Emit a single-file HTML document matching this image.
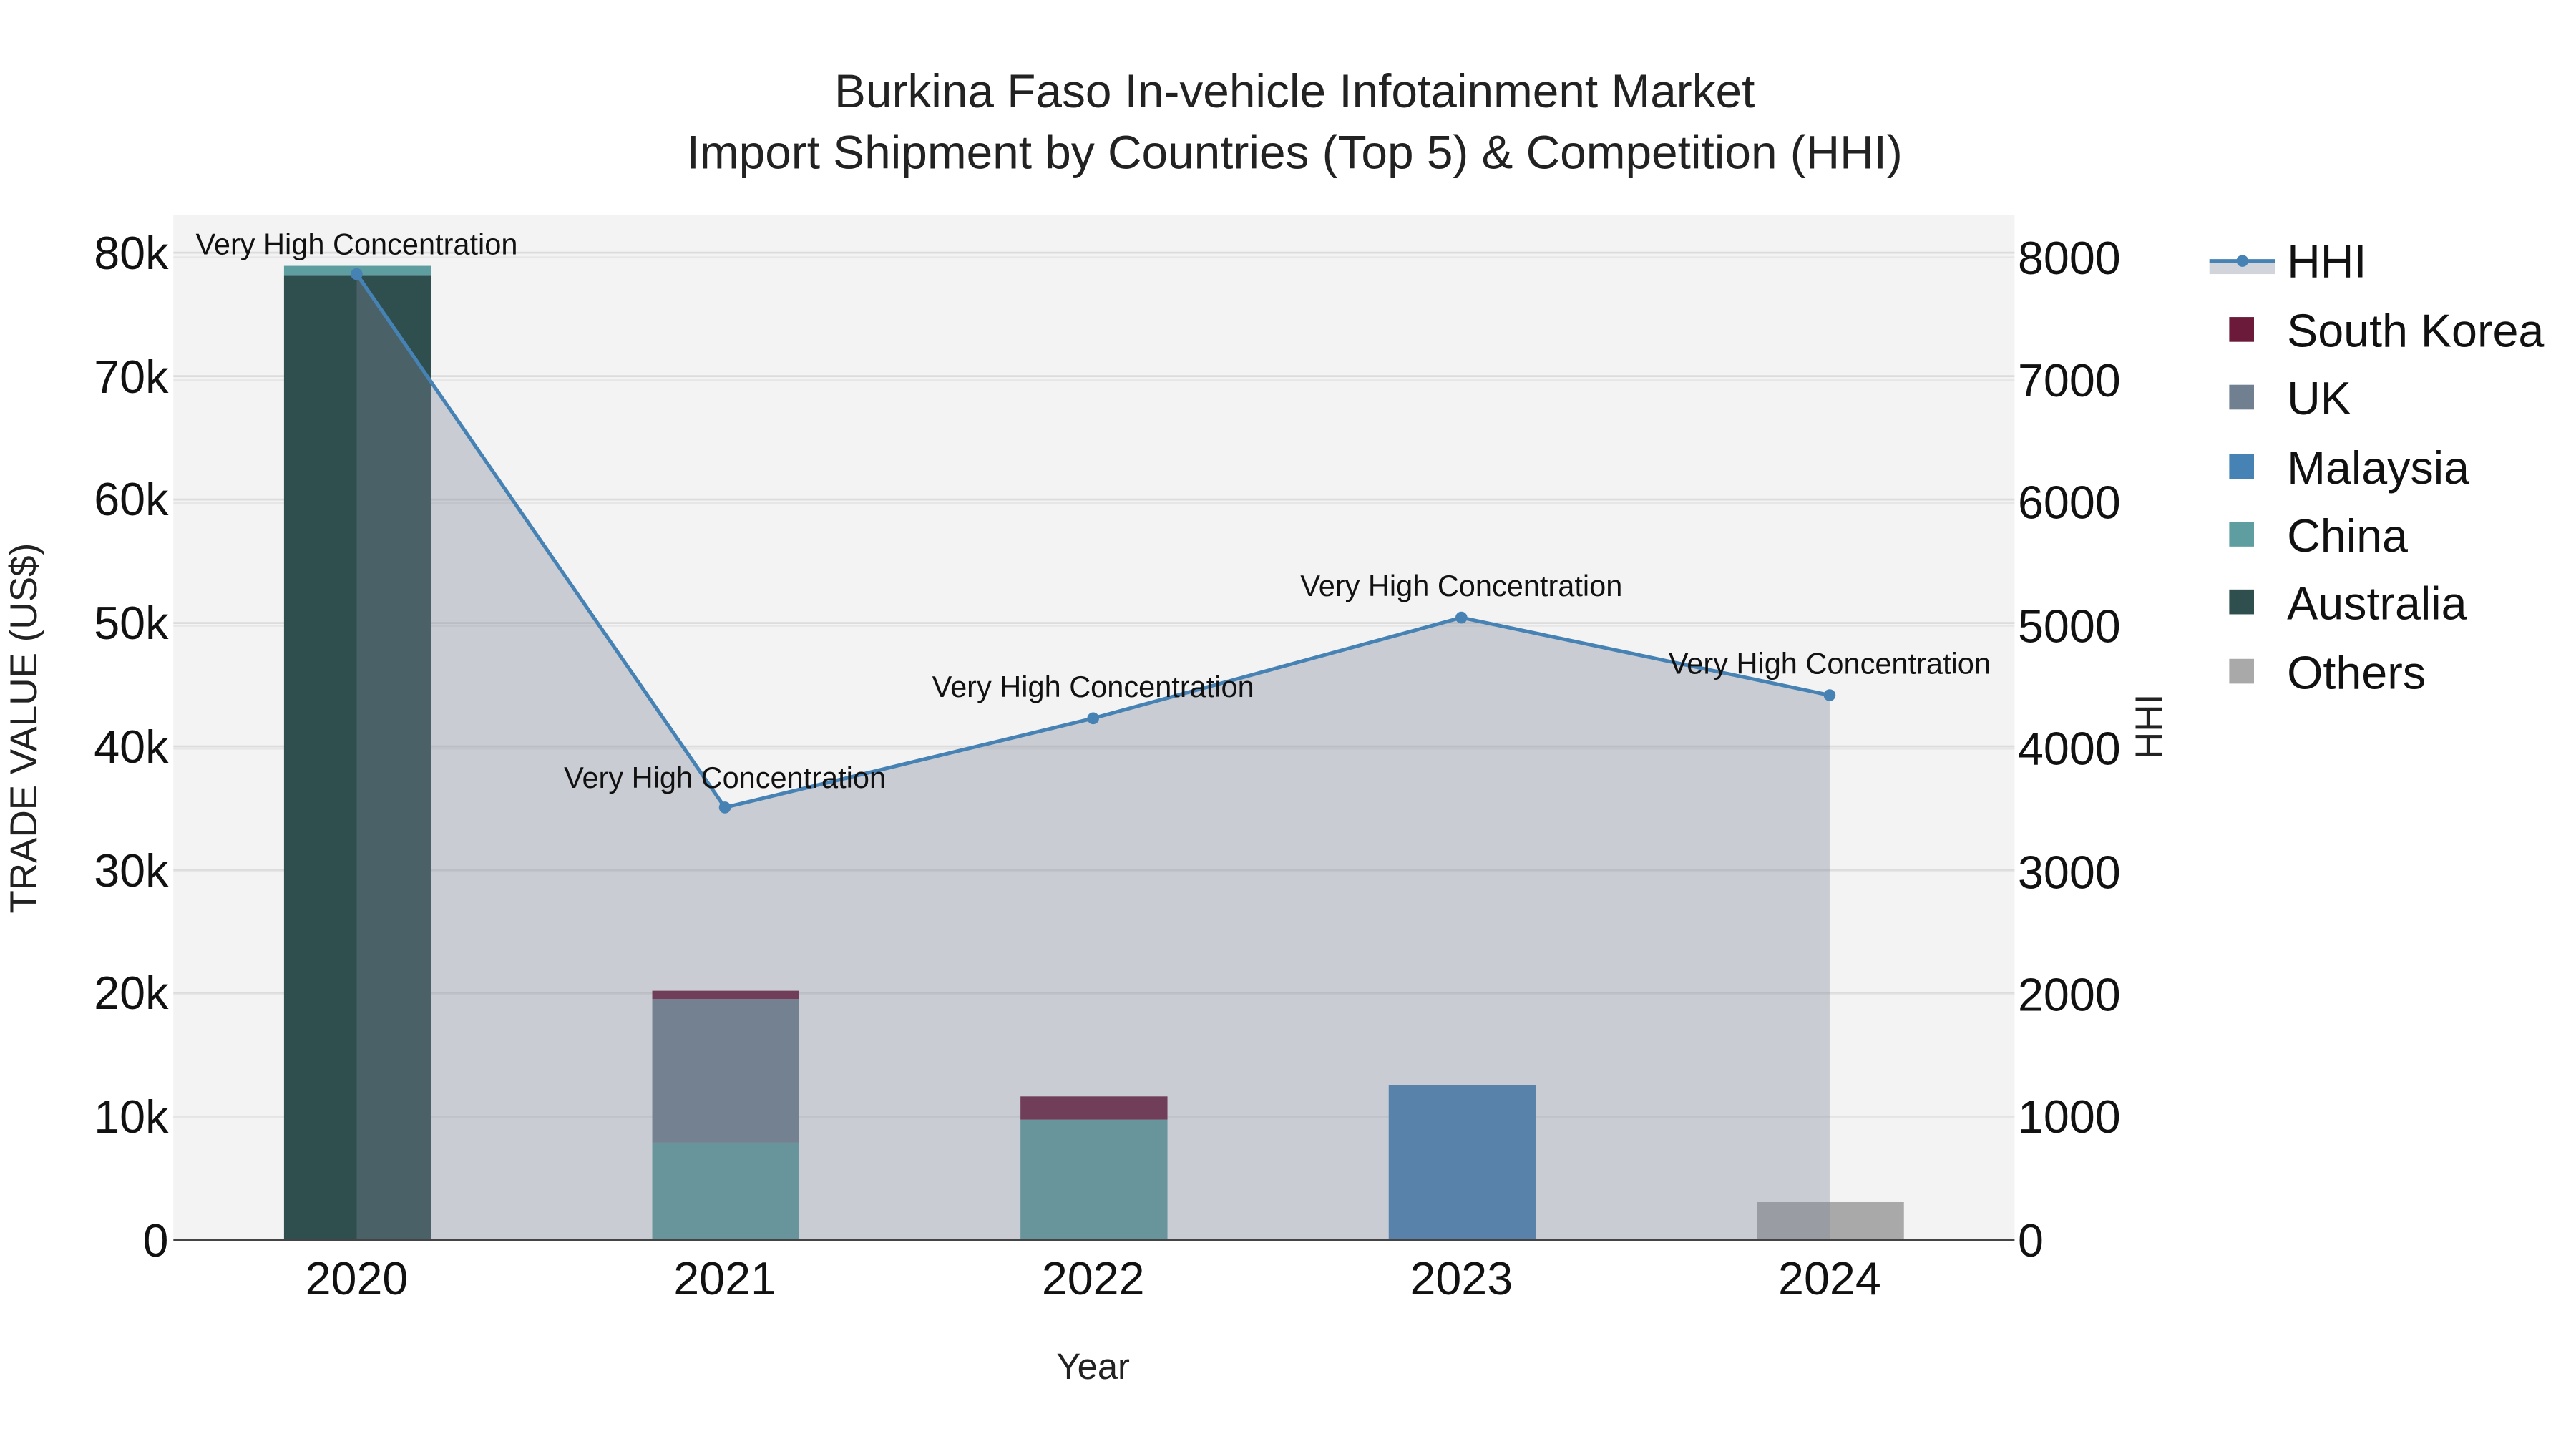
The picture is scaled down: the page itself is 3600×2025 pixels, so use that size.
<!DOCTYPE html>
<html><head><meta charset="utf-8"><style>
html,body{margin:0;padding:0;background:#fff;}
svg{display:block;}
text{font-family:"Liberation Sans",sans-serif;}
</style></head><body>
<svg width="3600" height="2025" viewBox="0 0 1560 877.5" xmlns="http://www.w3.org/2000/svg">
<rect x="0" y="0" width="1560" height="877.5" fill="#fff"/>
<rect x="105" y="130" width="1115" height="621" fill="#f3f3f3"/>
<g stroke="#dcdcdc" stroke-width="1.2">
<line x1="105" x2="1220" y1="676.25" y2="676.25"/>
<line x1="105" x2="1220" y1="601.5" y2="601.5"/>
<line x1="105" x2="1220" y1="526.75" y2="526.75"/>
<line x1="105" x2="1220" y1="452" y2="452"/>
<line x1="105" x2="1220" y1="377.25" y2="377.25"/>
<line x1="105" x2="1220" y1="302.5" y2="302.5"/>
<line x1="105" x2="1220" y1="227.75" y2="227.75"/>
<line x1="105" x2="1220" y1="153" y2="153"/>
</g>
<g stroke="#e6e6e6" stroke-width="1">
<line x1="105" x2="1220" y1="676.6" y2="676.6"/>
<line x1="105" x2="1220" y1="602.2" y2="602.2"/>
<line x1="105" x2="1220" y1="527.8" y2="527.8"/>
<line x1="105" x2="1220" y1="453.4" y2="453.4"/>
<line x1="105" x2="1220" y1="379" y2="379"/>
<line x1="105" x2="1220" y1="304.6" y2="304.6"/>
<line x1="105" x2="1220" y1="230.2" y2="230.2"/>
<line x1="105" x2="1220" y1="155.8" y2="155.8"/>
</g>
<rect x="172" y="167" width="89" height="584" fill="#2f4f4f"/>
<rect x="172" y="161" width="89" height="6" fill="#5f9ea0"/>
<rect x="395" y="692" width="89" height="59" fill="#5f9ea0"/>
<rect x="395" y="605" width="89" height="87" fill="#708090"/>
<rect x="395" y="600" width="89" height="5" fill="#6b1a3a"/>
<rect x="618" y="678" width="89" height="73" fill="#5f9ea0"/>
<rect x="618" y="664" width="89" height="14" fill="#6b1a3a"/>
<rect x="841" y="657" width="89" height="94" fill="#4682b4"/>
<rect x="1064" y="728" width="89" height="23" fill="#a9a9a9"/>
<polygon points="216,166 439,489 662,435 885,374 1108,421 1108,751 216,751" fill="rgb(123,133,148)" fill-opacity="0.35"/>
<line x1="105" x2="1220" y1="751" y2="751" stroke="#444" stroke-width="1.2"/>
<polyline points="216,166 439,489 662,435 885,374 1108,421" fill="none" stroke="#4682b4" stroke-width="2.2"/>
<g fill="#4682b4">
<circle cx="216" cy="166" r="3.6"/><circle cx="439" cy="489" r="3.6"/><circle cx="662" cy="435" r="3.6"/><circle cx="885" cy="374" r="3.6"/><circle cx="1108" cy="421" r="3.6"/>
</g>
<g font-size="18" fill="#111" text-anchor="middle">
<text x="216" y="154">Very High Concentration</text>
<text x="439" y="477">Very High Concentration</text>
<text x="662" y="422">Very High Concentration</text>
<text x="885" y="361">Very High Concentration</text>
<text x="1108" y="408">Very High Concentration</text>
</g>
<g font-size="28.5" fill="#222" text-anchor="middle">
<text x="784" y="65">Burkina Faso In-vehicle Infotainment Market</text>
<text x="784" y="102">Import Shipment by Countries (Top 5) &amp; Competition (HHI)</text>
</g>
<g font-size="28" fill="#111" text-anchor="end">
<text x="102" y="761">0</text>
<text x="102" y="686">10k</text>
<text x="102" y="611">20k</text>
<text x="102" y="537">30k</text>
<text x="102" y="462">40k</text>
<text x="102" y="387">50k</text>
<text x="102" y="312">60k</text>
<text x="102" y="238">70k</text>
<text x="102" y="163">80k</text>
</g>
<g font-size="28" fill="#111" text-anchor="start">
<text x="1222" y="761">0</text>
<text x="1222" y="686">1000</text>
<text x="1222" y="612">2000</text>
<text x="1222" y="538">3000</text>
<text x="1222" y="463">4000</text>
<text x="1222" y="389">5000</text>
<text x="1222" y="314">6000</text>
<text x="1222" y="240">7000</text>
<text x="1222" y="166">8000</text>
</g>
<g font-size="28" fill="#111" text-anchor="middle">
<text x="216" y="784">2020</text>
<text x="439" y="784">2021</text>
<text x="662" y="784">2022</text>
<text x="885" y="784">2023</text>
<text x="1108" y="784">2024</text>
</g>
<text x="662" y="835" font-size="22" fill="#222" text-anchor="middle">Year</text>
<text transform="translate(22,441) rotate(-90)" font-size="23" fill="#222" text-anchor="middle">TRADE VALUE (US$)</text>
<text transform="translate(1309,440) rotate(-90)" font-size="23" fill="#222" text-anchor="middle">HHI</text>
<rect x="1338" y="158" width="40" height="8" fill="rgb(123,133,148)" fill-opacity="0.35"/>
<line x1="1338" x2="1378" y1="158" y2="158" stroke="#4682b4" stroke-width="2.2"/>
<circle cx="1358" cy="158" r="3.6" fill="#4682b4"/>
<rect x="1350" y="192" width="15" height="15" fill="#6b1a3a"/>
<rect x="1350" y="233" width="15" height="15" fill="#708090"/>
<rect x="1350" y="275" width="15" height="15" fill="#4682b4"/>
<rect x="1350" y="316" width="15" height="15" fill="#5f9ea0"/>
<rect x="1350" y="357" width="15" height="15" fill="#2f4f4f"/>
<rect x="1350" y="399" width="15" height="15" fill="#a9a9a9"/>
<g font-size="28" fill="#111">
<text x="1385" y="168">HHI</text>
<text x="1385" y="210">South Korea</text>
<text x="1385" y="251">UK</text>
<text x="1385" y="293">Malaysia</text>
<text x="1385" y="334">China</text>
<text x="1385" y="375">Australia</text>
<text x="1385" y="417">Others</text>
</g>
</svg>
</body></html>
